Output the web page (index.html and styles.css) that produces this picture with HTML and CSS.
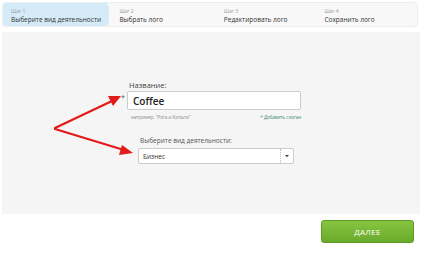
FILE: index.html
```html
<!DOCTYPE html>
<html lang="ru">
<head>
    <meta charset="UTF-8">
    <title>Создать логотип</title>
    <link rel="stylesheet" href="styles.css">
</head>
<body>
    <div class="steps">
        <div class="step active">
            <span class="step-num">Шаг 1</span>
            <span class="step-name">Выберите вид деятельности</span>
        </div>
        <div class="step">
            <span class="step-num">Шаг 2</span>
            <span class="step-name">Выбрать лого</span>
        </div>
        <div class="step">
            <span class="step-num">Шаг 3</span>
            <span class="step-name">Редактировать лого</span>
        </div>
        <div class="step">
            <span class="step-num">Шаг 4</span>
            <span class="step-name">Сохранить лого</span>
        </div>
    </div>

    <div class="panel">
        <svg class="arrows" width="140" height="140" viewBox="0 0 140 140">
            <g stroke="#e21a1a" stroke-width="2.2" fill="#e21a1a" stroke-linecap="round">
                <line x1="53" y1="96" x2="110" y2="69"/>
                <polygon points="119,64 106,64 111,74" stroke="none"/>
                <line x1="53" y1="97" x2="122" y2="118"/>
                <polygon points="131,121 120,113 117,123" stroke="none"/>
            </g>
        </svg>
        <form class="form">
            <div class="field">
                <label class="label">Название:</label>
                <div class="input-row">
                    <span class="req">*</span>
                    <div class="input">Coffee</div>
                </div>
                <div class="hints">
                    <span>например, "Рога и Копыта"</span>
                    <span class="add">+ Добавить слоган</span>
                </div>
            </div>
            <div class="field select-field">
                <label class="label">Выберите вид деятельности:</label>
                <div class="select">
                    <span>Бизнес</span>
                    <span class="caret"></span>
                </div>
            </div>
        </form>
    </div>

    <div class="actions">
        <button class="next-btn" type="button">ДАЛЕЕ</button>
    </div>
</body>
</html>
```

FILE: styles.css
```css
body {
    margin: 0;
    padding: 2px 0 0 2px;
    font-family: "Open Sans", "Liberation Sans", Arial, sans-serif;
    background: #ffffff;
}

.steps {
    display: flex;
    height: 25px;
    background: #f8f8f8;
    border: 1px solid #eeeeee;
    border-radius: 4px;
    box-sizing: border-box;
    width: 416px;
    overflow: hidden;
}

.step {
    width: 104px;
    padding: 5px 0 0 8px;
    box-sizing: border-box;
    display: flex;
    flex-direction: column;
}

.step.active {
    background: #d5ecf8;
    width: 110px;
    margin-right: 6px;
    clip-path: polygon(0 0, 104px 0, 110px 50%, 104px 100%, 0 100%);
}

.step:nth-child(2) {
    padding-left: 4px;
}

.step-num {
    font-size: 5px;
    color: #9a9a9a;
    line-height: 7px;
}

.step-name {
    font-size: 6.5px;
    color: #333333;
    line-height: 9px;
}

.panel {
    position: relative;
    margin-top: 5px;
    background: #f5f5f5;
    height: 182px;
    width: 418px;
}

.arrows {
    position: absolute;
    left: 0;
    top: 0;
}

.form {
    position: relative;
    padding: 48px 0 0 119px;
}

.label {
    display: block;
    font-size: 7.5px;
    color: #444444;
    margin-left: 8px;
    line-height: 10px;
}

.input-row {
    display: flex;
    align-items: flex-start;
    margin-top: 1px;
}

.req {
    width: 6px;
    font-size: 7px;
    color: #555555;
    line-height: 10px;
    margin-top: 2px;
}

.input {
    width: 174px;
    height: 19px;
    box-sizing: border-box;
    border: 1px solid #cccccc;
    background: #ffffff;
    border-radius: 2px;
    font-size: 10px;
    font-weight: 600;
    color: #222222;
    padding: 2px 5px 0;
    line-height: 14px;
}

.hints {
    display: flex;
    justify-content: space-between;
    width: 170px;
    margin-left: 10px;
    margin-top: 4px;
    font-size: 4.5px;
    color: #8a8a8a;
}

.hints .add {
    color: #3a8a6a;
}

.select-field {
    margin-top: 16px;
    margin-left: 17px;
}

.select-field .label {
    margin-left: 2px;
    font-size: 6.5px;
    color: #555555;
}

.select {
    margin-top: 2px;
    width: 156px;
    height: 16px;
    box-sizing: border-box;
    border: 1px solid #cccccc;
    background: #ffffff;
    border-radius: 2px;
    display: flex;
    align-items: center;
    justify-content: space-between;
    padding-left: 4px;
    font-size: 6.5px;
    color: #333333;
}

.caret {
    width: 12px;
    height: 100%;
    border-left: 1px dotted #bbbbbb;
    position: relative;
}

.caret::after {
    content: "";
    position: absolute;
    left: 4px;
    top: 6px;
    border-left: 2px solid transparent;
    border-right: 2px solid transparent;
    border-top: 2px solid #333333;
}

.actions {
    display: flex;
    justify-content: flex-end;
    width: 412px;
    padding-top: 6px;
}

.next-btn {
    width: 93px;
    height: 23px;
    border: 1px solid #5d9b25;
    border-radius: 3px;
    background: linear-gradient(#87c540, #6aaa2c);
    color: #ffffff;
    font-family: "Open Sans", "Liberation Sans", Arial, sans-serif;
    font-size: 8px;
    letter-spacing: 0.3px;
    cursor: pointer;
    box-shadow: 0 1px 1px rgba(0, 0, 0, 0.15);
}
```
